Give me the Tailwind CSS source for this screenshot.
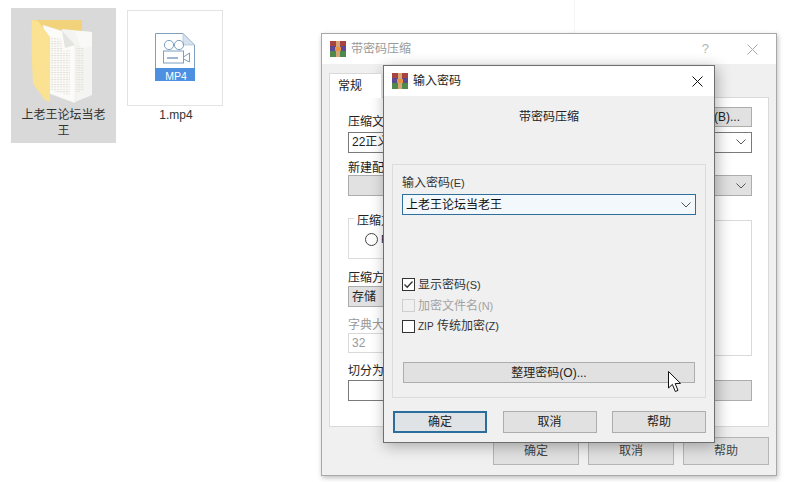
<!DOCTYPE html>
<html lang="zh">
<head>
<meta charset="UTF-8">
<title>带密码压缩</title>
<script src="https://cdn.jsdelivr.net/npm/@tailwindcss/browser@4"></script>
</head>
<body class="bg-white">
<div class="relative w-[786px] h-[482px] overflow-hidden bg-white text-[12px] leading-[14px] text-[#222] font-['Liberation_Sans','Noto_Sans_CJK_SC',sans-serif]">

  <!-- desktop files -->
  <div class="absolute left-[11px] top-[8px] w-[105px] h-[135px] bg-[#d9d9d9] flex flex-col items-center">
    <svg width="105" height="95" viewBox="11 8 105 95" class="shrink-0">
      <defs>
        <pattern id="txt" width="3" height="2.4" patternUnits="userSpaceOnUse"><rect width="2.4" height="1" fill="#e2e0d6"/></pattern>
      </defs>
      <path d="M33 20 L82 20 L82 32 L60 40 L40 32 Z" fill="#f2d27a"/>
      <path d="M62 29 L92 32 L92 95 L75 102 L62 90 Z" fill="#f4f4f2"/>
      <path d="M76 46 L84 47 L84 90 L76 93 Z" fill="url(#txt)"/>
      <path d="M75 31 L81 48 L92 46 L92 32 Z" fill="#f9f9f8"/>
      <path d="M43 25 L62 31 L75 45 L75 103 L48 93 Z" fill="#fbfbf9" stroke="#e8e8e4" stroke-width=".5"/>
      <path d="M62 31 L65 48 L75 45 Z" fill="#e4e4e1"/>
      <path d="M50 37 L61 39 L63 51 L70 50 L70 96 L50 90 Z" fill="url(#txt)"/>
      <path d="M32 20 L38 21 L50 37 L50 102 L45 100 L33 84 Q31 50 32 20 Z" fill="#fbe192"/>
    </svg>
    <div class="w-[88px] text-center leading-[16px] text-[#333] mt-[4px]">上老王论坛当老王</div>
  </div>
  <div class="absolute left-[127px] top-[10px] w-[96px] h-[96px] border border-[#e3e3e3] bg-white flex items-center justify-center">
    <svg width="40" height="48" viewBox="0 0 40 48" class="mb-[3px]">
      <path d="M.5 .5 H28 L39.5 12 V36 H.5 Z" fill="#fff" stroke="#7d9fc0"/>
      <path d="M28 .5 V12 H39.5 Z" fill="#d6e2ee" stroke="#a9c0d6" stroke-width=".7"/>
      <rect x="0" y="35" width="40" height="13" fill="#4d8fe0"/>
      <circle cx="14" cy="12" r="4.6" fill="none" stroke="#7d9fc0"/>
      <circle cx="24" cy="12" r="4.6" fill="none" stroke="#7d9fc0"/>
      <rect x="8.5" y="18" width="20" height="12" fill="none" stroke="#7d9fc0"/>
      <path d="M28.5 24 L34.5 20 V29 L28.5 26" fill="none" stroke="#7d9fc0"/>
      <path d="M12 25 H23" stroke="#7d9fc0" stroke-width="1.5"/>
    </svg>
    <span class="absolute left-[30px] top-[58px] w-[36px] text-center text-[10.5px] text-white">MP4</span>
  </div>
  <div class="absolute left-[127px] top-[107px] w-[98px] text-center leading-[16px] text-[#333]">1.mp4</div>
  <div class="absolute left-[574px] top-0 w-px h-[33px] bg-[#f6f6f6]"></div>

  <!-- back window -->
  <div class="absolute left-[321px] top-[33px] w-[456px] h-[443px] bg-[#f0f0f0] border border-[#a8a8a8] shadow-[1px_2px_5px_rgba(0,0,0,0.25)] flex flex-col">
    <div class="h-[30px] shrink-0 bg-white flex items-center pl-[8px] pr-[18px] text-[#999]">
      <svg width="16" height="16" viewBox="0 0 16 16" class="mr-[5px]">
        <rect x="0" y="0" width="16" height="5" fill="#a8433f"/><rect x="0" y="5" width="16" height="5" fill="#5b4a93"/><rect x="0" y="10" width="16" height="6" fill="#4f8a4c"/>
        <rect x="6" y="0" width="4" height="16" fill="#d6a676"/><rect x="5" y="6" width="6" height="4" fill="#e8913f"/>
      </svg>
      <span>带密码压缩</span>
      <span class="ml-auto mr-[38px] text-[#b5b5b5] text-[13px]">?</span>
      <svg width="11" height="11" viewBox="0 0 11 11"><path d="M.5 .5 L10.5 10.5 M10.5 .5 L.5 10.5" stroke="#aaa"/></svg>
    </div>
    <div class="relative px-[7px] pt-[9px]">
      <div class="relative z-10 w-[53px] h-[25px] bg-white border border-b-0 border-[#d9d9d9] pl-[8px] pt-[5px]">常规</div>
      <div class="-mt-px h-[330px] bg-white border border-[#d9d9d9] pl-[18px] pr-[16px] pt-[17px] flex flex-col">
        <div class="flex justify-between items-start h-[14px]">
          <span>压缩文</span>
          <span class="-mt-[8px] w-[120px] h-[20px] bg-[#e1e1e1] border border-[#adadad] text-right pr-[11px] pt-[2px]">(B)...</span>
        </div>
        <div class="mt-[3px] h-[21px] border border-[#7a7a7a] pl-[3px] pt-[2px] flex justify-between"><span>22正义</span><span class="pr-[5px]"><svg width="10" height="6" viewBox="0 0 10 6" class="mt-[4px]"><path d="M.5 .5 L5 5 L9.5 .5" fill="none" stroke="#555"/></svg></span></div>
        <div class="mt-[8px]">新建配</div>
        <div class="mt-[0px] h-[21px] bg-[#e1e1e1] border border-[#adadad] flex justify-end pr-[5px]"><svg width="10" height="6" viewBox="0 0 10 6" class="mt-[7px]"><path d="M.5 .5 L5 5 L9.5 .5" fill="none" stroke="#555"/></svg></div>
        <div class="mt-[22px] relative h-[41px] w-[100px] border border-[#dcdcdc]">
          <span class="absolute left-[5px] -top-[5px] bg-white px-[3px]">压缩方</span>
          <span class="absolute left-[16px] top-[14px] w-[13px] h-[13px] rounded-full border border-[#444]"></span>
          <span class="absolute left-[32px] top-[13px] text-[11px]">R</span>
        </div>
        <div class="mt-[12px]">压缩方</div>
        <div class="mt-[1px] h-[21px] w-[100px] bg-[#e1e1e1] border border-[#adadad] pl-[3px] pt-[3px]">存储</div>
        <div class="mt-[11px] text-[#999]">字典大</div>
        <div class="mt-[1px] h-[20px] w-[100px] border border-[#d9d9d9] text-[#999] pl-[3px] pt-[2px]">32</div>
        <div class="mt-[11px]">切分为</div>
        <div class="mt-[2px] flex gap-[10px]">
          <div class="h-[21px] w-[100px] border border-[#7a7a7a]"></div>
          <div class="ml-auto h-[21px] w-[60px] bg-[#e1e1e1] border border-[#adadad]"></div>
        </div>
      </div>
      <div class="absolute right-[24px] top-[156px] w-[60px] h-[136px] border border-[#d9d9d9] bg-white"></div>
    </div>
    <div class="flex justify-end gap-[9px] pr-[7px] mt-[10px]">
      <div class="w-[86px] h-[28px] bg-[#e1e1e1] border border-[#b5b5b5] flex items-center justify-center text-[#444]">确定</div>
      <div class="w-[86px] h-[28px] bg-[#e1e1e1] border border-[#b5b5b5] flex items-center justify-center text-[#444]">取消</div>
      <div class="w-[86px] h-[28px] bg-[#e1e1e1] border border-[#b5b5b5] flex items-center justify-center text-[#444]">帮助</div>
    </div>
  </div>

  <!-- front window -->
  <div class="absolute left-[383px] top-[65px] w-[332px] h-[378px] bg-[#f0f0f0] border border-[#6f6f6f] shadow-[2px_3px_14px_rgba(0,0,0,0.3)] flex flex-col">
    <div class="h-[30px] shrink-0 bg-white flex items-center pl-[8px] pr-[11px] text-[#222]">
      <svg width="16" height="16" viewBox="0 0 16 16" class="mr-[5px]">
        <rect x="0" y="0" width="16" height="5" fill="#a8433f"/><rect x="0" y="5" width="16" height="5" fill="#5b4a93"/><rect x="0" y="10" width="16" height="6" fill="#4f8a4c"/>
        <rect x="6" y="0" width="4" height="16" fill="#d6a676"/><rect x="5" y="6" width="6" height="4" fill="#e8913f"/>
      </svg>
      <span>输入密码</span>
      <svg width="11" height="11" viewBox="0 0 11 11" class="ml-auto"><path d="M.5 .5 L10.5 10.5 M10.5 .5 L.5 10.5" stroke="#111"/></svg>
    </div>
    <div class="flex-1 px-[8px] flex flex-col">
      <div class="text-center mt-[14px]">带密码压缩</div>
      <div class="mt-[40px] h-[234px] border border-[#dcdcdc] px-[9px] pt-[11px] flex flex-col">
        <div class="text-[#333]">输入密码<span class="text-[11px]">(E)</span></div>
        <div class="mt-[4px] h-[21px] border border-[#2f6f9c] bg-[#f3f8fc] flex items-center justify-between pl-[3px] pr-[4px] text-[#111]">
          <span>上老王论坛当老王</span>
          <svg width="10" height="6" viewBox="0 0 10 6"><path d="M.5 .5 L5 5 L9.5 .5" fill="none" stroke="#555"/></svg>
        </div>
        <div class="mt-[63px] flex items-center gap-[3px] h-[13px]">
          <svg width="13" height="13" viewBox="0 0 13 13"><rect x=".5" y=".5" width="12" height="12" fill="#fff" stroke="#333"/><path d="M2.5 6.5 L5.2 9.3 L10.5 3.5" fill="none" stroke="#333" stroke-width="1.3"/></svg>
          <span class="text-[#333]">显示密码<span class="text-[11px]">(S)</span></span>
        </div>
        <div class="mt-[8px] flex items-center gap-[3px] h-[13px] text-[#a3a3a3]">
          <span class="w-[13px] h-[13px] border border-[#cfcfcf]"></span><span>加密文件名<span class="text-[11px]">(N)</span></span>
        </div>
        <div class="mt-[8px] flex items-center gap-[3px] h-[13px] text-[#333]">
          <span class="w-[13px] h-[13px] border border-[#333] bg-white"></span><span><span class="text-[10px]">ZIP</span> 传统加密<span class="text-[11px]">(Z)</span></span>
        </div>
        <div class="mt-[29px] mx-[1px] h-[21px] bg-[#e1e1e1] border border-[#adadad] flex items-center justify-center text-[#222]">整理密码(O)...</div>
      </div>
      <div class="mt-[13px] pl-[1px] flex justify-between">
        <div class="w-[94px] h-[22px] bg-[#dfe3e6] border-[2px] border-[#2c6e9b] flex items-center justify-center">确定</div>
        <div class="w-[94px] h-[22px] bg-[#e1e1e1] border border-[#adadad] flex items-center justify-center">取消</div>
        <div class="w-[94px] h-[22px] bg-[#e1e1e1] border border-[#adadad] flex items-center justify-center">帮助</div>
      </div>
    </div>
  </div>

  <!-- cursor -->
  <svg class="absolute left-[668px] top-[371px]" width="14" height="22" viewBox="0 0 14 22">
    <path d="M.5 .5 V17 L4.4 13.4 L7.3 20.5 L10 19.4 L7.2 12.6 L12.5 12.4 Z" fill="#fff" stroke="#111"/>
  </svg>
</div>
</body>
</html>
